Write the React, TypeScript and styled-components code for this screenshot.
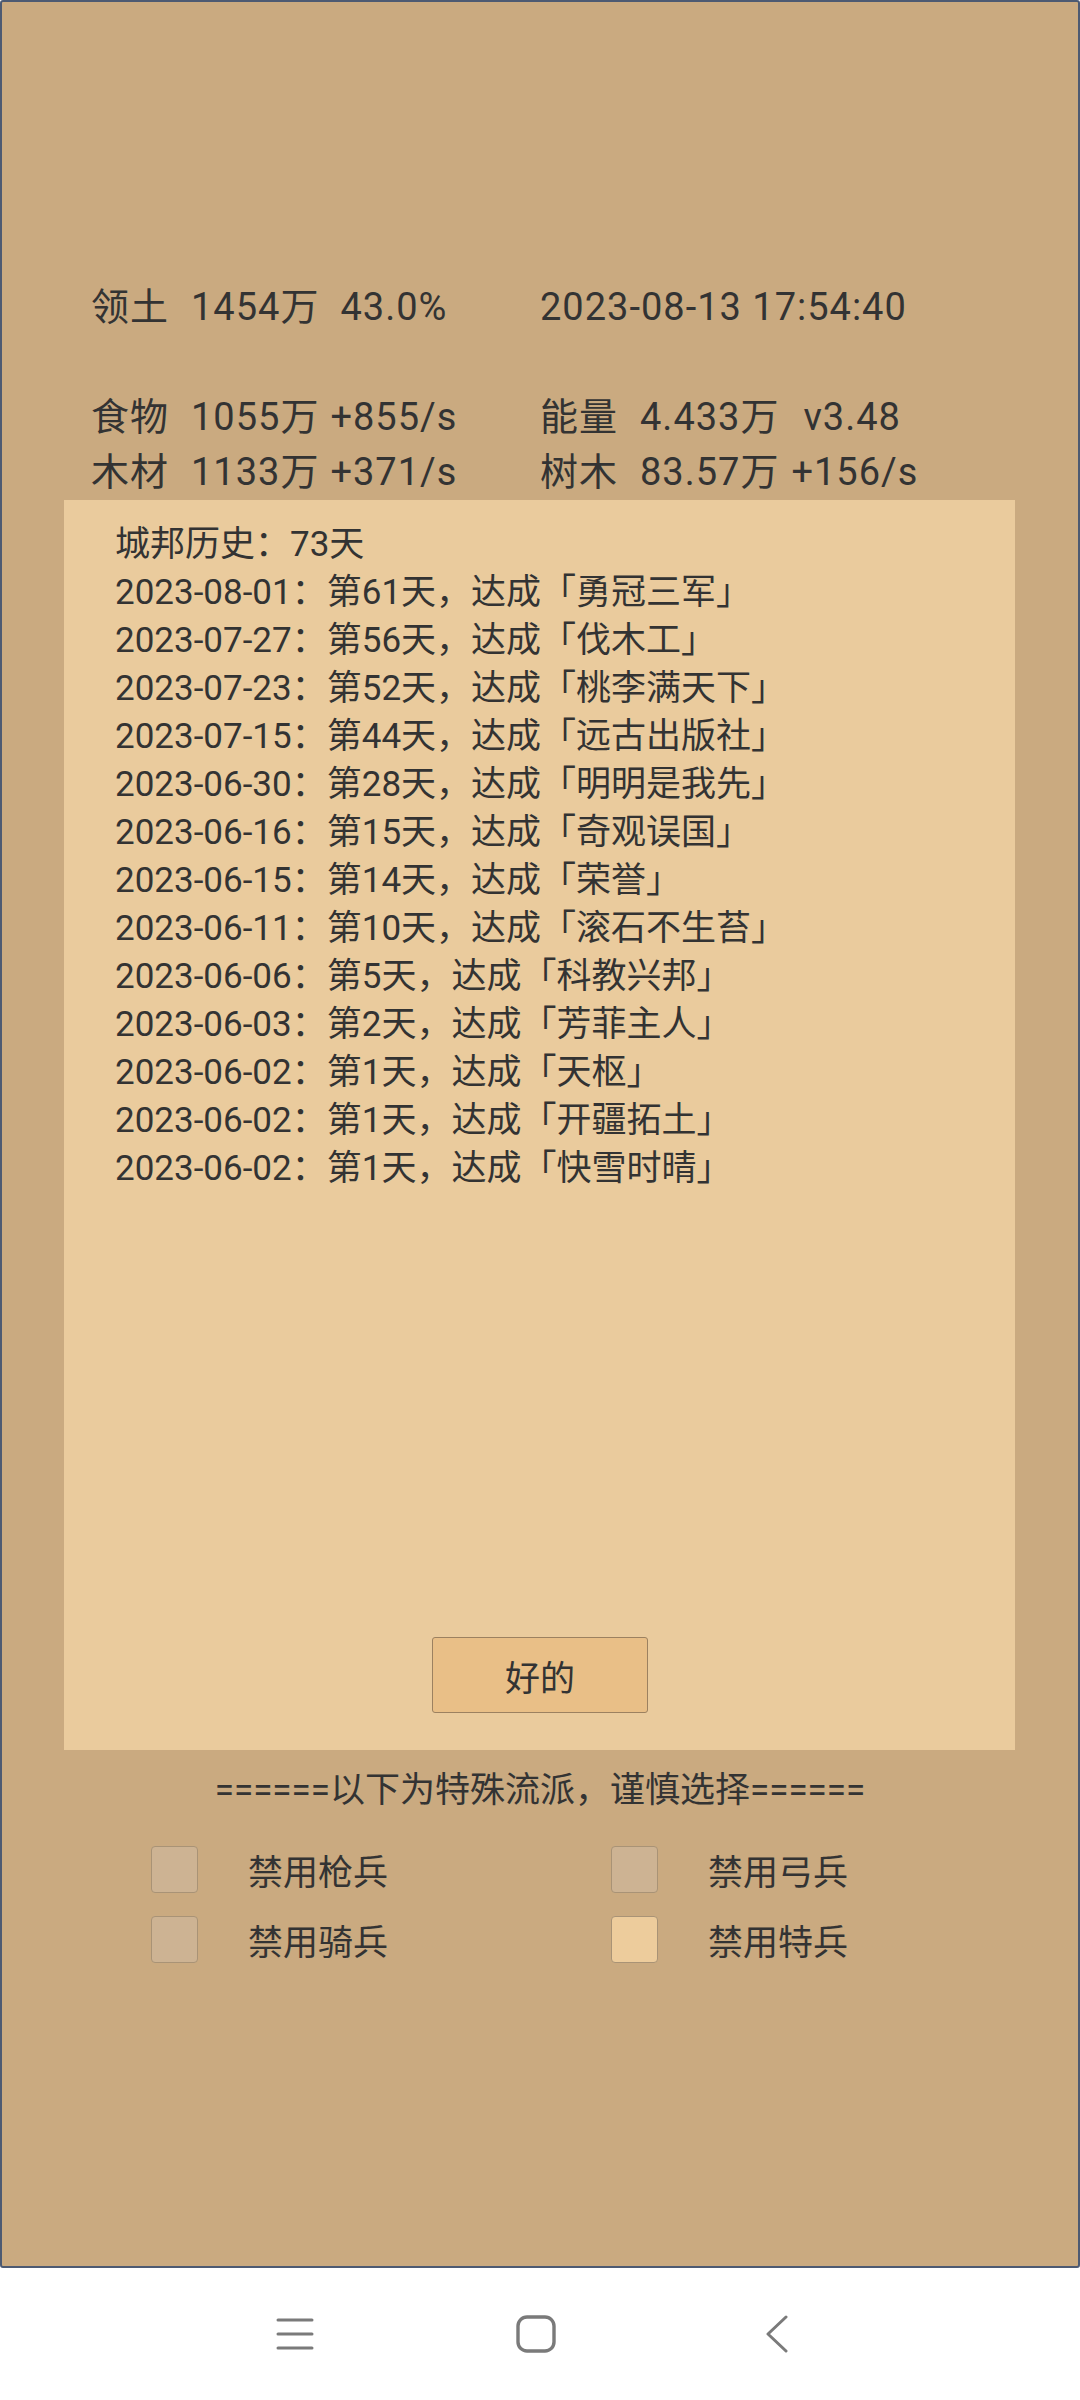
import React from 'react';
import styled, { createGlobalStyle } from 'styled-components';

const GlobalStyle = createGlobalStyle`
  html, body {
    margin: 0;
    padding: 0;
    background: #fff;
  }
  body {
    font-family: Roboto, 'Noto Sans CJK SC', sans-serif;
    color: #333;
  }
  * {
    box-sizing: border-box;
  }
`;

const Frame = styled.main`
  width: 1080px;
  height: 2268px;
  border: 2px solid #4d5a72;
  border-radius: 3px;
  background-color: #caaa80;
  display: flex;
  flex-direction: column;
`;

const StatsBlock = styled.section`
  padding: 278px 0 0 89px;
  display: grid;
  grid-template-columns: 449px 1fr;
  font-size: 38px;
  line-height: 55px;
  letter-spacing: 1px;
`;

const StatCell = styled.div`
  display: flex;
  white-space: nowrap;
  height: 55px;
`;

const StatLabel = styled.span`
  width: 100px;
`;

const StatValue = styled.span``;

const StatExtra = styled.span<{ $gap: number }>`
  margin-left: ${(p) => p.$gap}px;
`;

const HistoryPanel = styled.section`
  margin-left: 62px;
  width: 951px;
  height: 1250px;
  background-color: #eacb9d;
  padding: 21px 0 0 51px;
  display: flex;
  flex-direction: column;
`;

const HistoryLine = styled.div`
  font-size: 35px;
  line-height: 48px;
  white-space: nowrap;
`;

const OkButton = styled.button`
  margin: auto 0 37px 0;
  align-self: center;
  position: relative;
  left: -25px;
  width: 216px;
  height: 76px;
  background-color: #e9bf87;
  border: 1px solid #9c8160;
  border-radius: 3px;
  font-family: Roboto, 'Noto Sans CJK SC', sans-serif;
  font-size: 35px;
  color: #333;
  padding: 0;
`;

const Warning = styled.div`
  margin-top: 17px;
  text-align: center;
  font-size: 35px;
  line-height: 48px;
  white-space: nowrap;
`;

const OptionGrid = styled.div`
  margin-top: 19px;
  padding-left: 149px;
  display: grid;
  grid-template-columns: 460px 460px;
  grid-auto-rows: 70px;
`;

const Option = styled.label`
  display: flex;
  align-items: center;
  gap: 50px;
  font-size: 35px;
`;

const CheckBox = styled.span<{ $checked?: boolean }>`
  width: 47px;
  height: 47px;
  border-radius: 4px;
  border: 1px solid #a99376;
  background-color: ${(p) => (p.$checked ? '#edcc9c' : '#cdb393')};
`;

const NavBar = styled.nav`
  height: 132px;
  background: #fff;
  display: flex;
  align-items: center;
  justify-content: center;
  gap: 161px;
  padding-right: 9px;
`;

const NavButton = styled.div`
  width: 80px;
  height: 40px;
  display: flex;
  align-items: center;
  justify-content: center;
  color: #7a7a7a;
`;

const history = [
  '城邦历史：73天',
  '2023-08-01：第61天，达成「勇冠三军」',
  '2023-07-27：第56天，达成「伐木工」',
  '2023-07-23：第52天，达成「桃李满天下」',
  '2023-07-15：第44天，达成「远古出版社」',
  '2023-06-30：第28天，达成「明明是我先」',
  '2023-06-16：第15天，达成「奇观误国」',
  '2023-06-15：第14天，达成「荣誉」',
  '2023-06-11：第10天，达成「滚石不生苔」',
  '2023-06-06：第5天，达成「科教兴邦」',
  '2023-06-03：第2天，达成「芳菲主人」',
  '2023-06-02：第1天，达成「天枢」',
  '2023-06-02：第1天，达成「开疆拓土」',
  '2023-06-02：第1天，达成「快雪时晴」',
];

const options = [
  { label: '禁用枪兵', checked: false },
  { label: '禁用弓兵', checked: false },
  { label: '禁用骑兵', checked: false },
  { label: '禁用特兵', checked: true },
];

export default function App() {
  return (
    <>
      <GlobalStyle />
      <Frame>
        <StatsBlock>
          <StatCell>
            <StatLabel>领土</StatLabel>
            <StatValue>1454万</StatValue>
            <StatExtra $gap={21}>43.0%</StatExtra>
          </StatCell>
          <StatCell>2023-08-13 17:54:40</StatCell>
          <StatCell />
          <StatCell />
          <StatCell>
            <StatLabel>食物</StatLabel>
            <StatValue>1055万</StatValue>
            <StatExtra $gap={11}>+855/s</StatExtra>
          </StatCell>
          <StatCell>
            <StatLabel>能量</StatLabel>
            <StatValue>4.433万</StatValue>
            <StatExtra $gap={24}>v3.48</StatExtra>
          </StatCell>
          <StatCell>
            <StatLabel>木材</StatLabel>
            <StatValue>1133万</StatValue>
            <StatExtra $gap={11}>+371/s</StatExtra>
          </StatCell>
          <StatCell>
            <StatLabel>树木</StatLabel>
            <StatValue>83.57万</StatValue>
            <StatExtra $gap={12}>+156/s</StatExtra>
          </StatCell>
        </StatsBlock>

        <HistoryPanel>
          {history.map((line, i) => (
            <HistoryLine key={i}>{line}</HistoryLine>
          ))}
          <OkButton>好的</OkButton>
        </HistoryPanel>

        <Warning>======以下为特殊流派，谨慎选择======</Warning>

        <OptionGrid>
          {options.map((o) => (
            <Option key={o.label}>
              <CheckBox $checked={o.checked} />
              {o.label}
            </Option>
          ))}
        </OptionGrid>
      </Frame>

      <NavBar>
        <NavButton>
          <svg width="40" height="34" viewBox="0 0 40 34" fill="none" stroke="currentColor" strokeWidth="3" strokeLinecap="round">
            <line x1="3" y1="3" x2="37" y2="3" />
            <line x1="3" y1="17" x2="37" y2="17" />
            <line x1="3" y1="31" x2="37" y2="31" />
          </svg>
        </NavButton>
        <NavButton>
          <svg width="40" height="38" viewBox="0 0 40 38" fill="none" stroke="currentColor" strokeWidth="3.4">
            <rect x="2" y="2" width="36" height="34" rx="9" />
          </svg>
        </NavButton>
        <NavButton>
          <svg width="24" height="38" viewBox="0 0 24 38" fill="none" stroke="currentColor" strokeWidth="3" strokeLinecap="round" strokeLinejoin="round">
            <polyline points="21,2 3,19 21,36" />
          </svg>
        </NavButton>
      </NavBar>
    </>
  );
}
